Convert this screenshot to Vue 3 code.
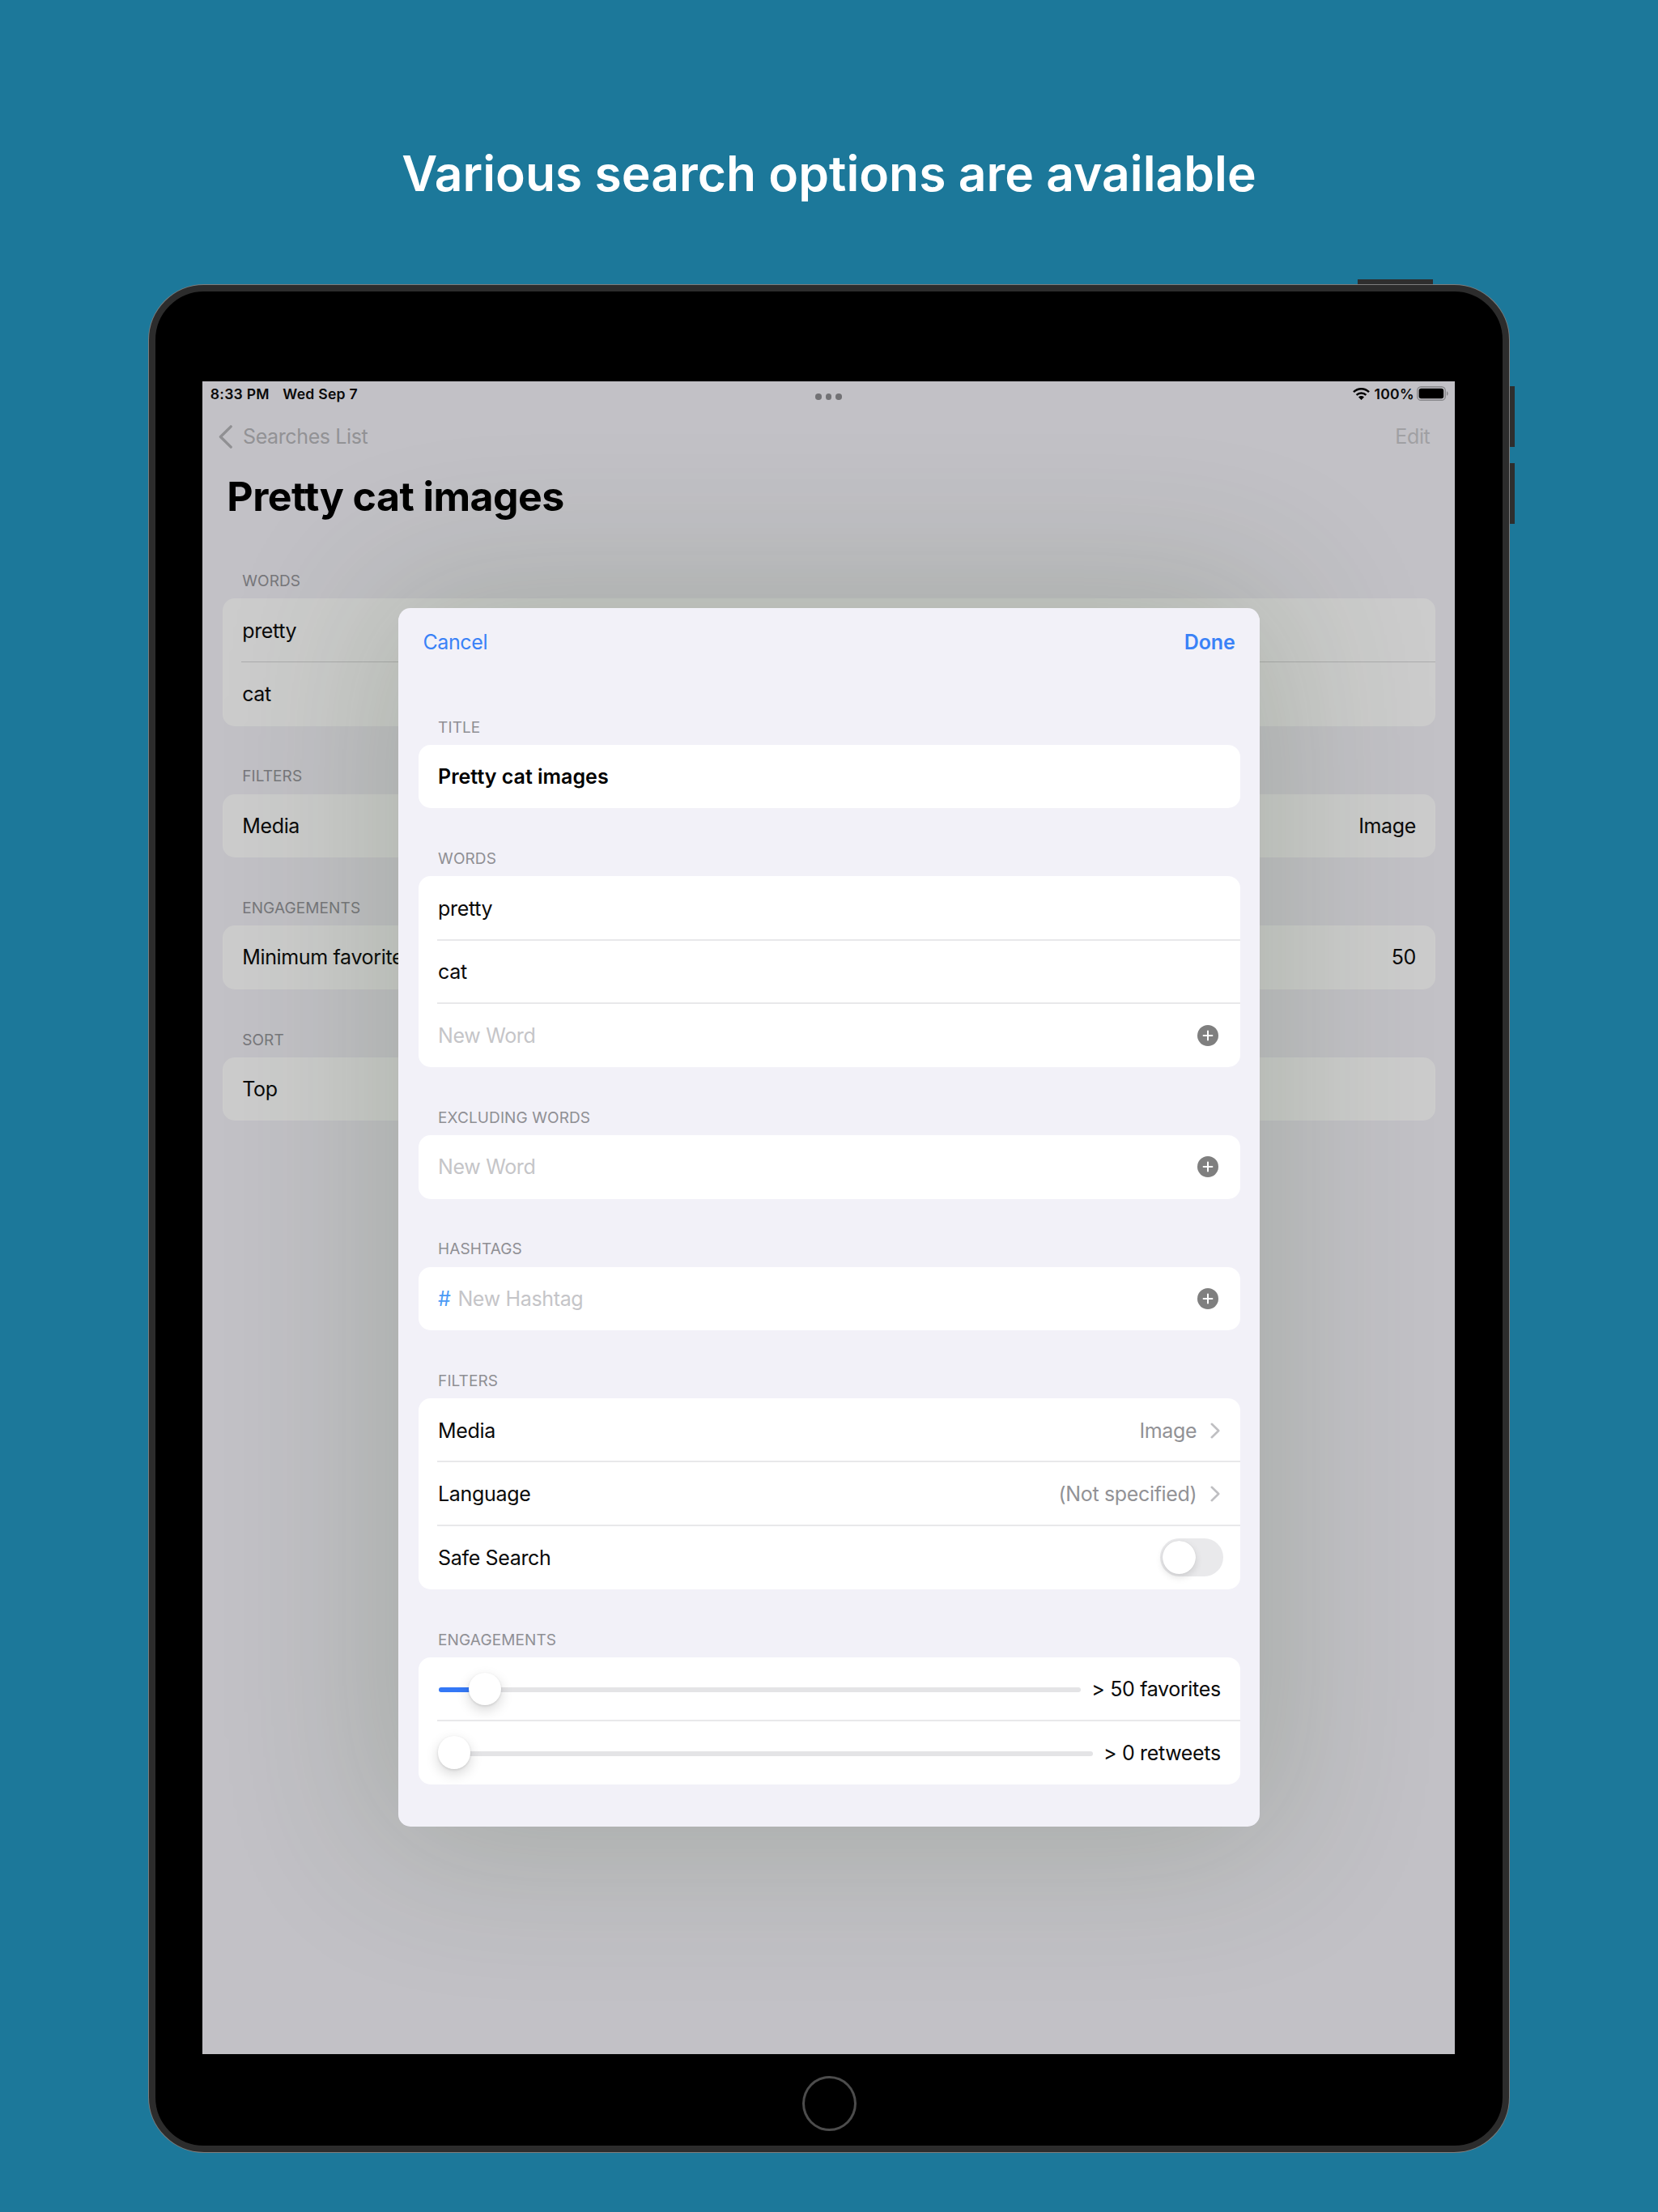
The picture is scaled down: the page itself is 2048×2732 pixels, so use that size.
<script setup>
const savedSections = [
  { title: 'Words', rows: [{ label: 'pretty' }, { label: 'cat' }] },
  { title: 'Filters', rows: [{ label: 'Media', value: 'Image' }] },
  { title: 'Engagements', rows: [{ label: 'Minimum favorites', value: '50' }] },
  { title: 'Sort', rows: [{ label: 'Top' }] },
]

const formSections = [
  { title: 'Title', rows: [{ kind: 'text', label: 'Pretty cat images', strong: true }] },
  {
    title: 'Words',
    rows: [
      { kind: 'text', label: 'pretty' },
      { kind: 'text', label: 'cat' },
      { kind: 'add', label: 'New Word' },
    ],
  },
  { title: 'Excluding Words', rows: [{ kind: 'add', label: 'New Word' }] },
  { title: 'Hashtags', rows: [{ kind: 'add', prefix: '#', label: 'New Hashtag' }] },
  {
    title: 'Filters',
    rows: [
      { kind: 'link', label: 'Media', value: 'Image' },
      { kind: 'link', label: 'Language', value: '(Not specified)' },
      { kind: 'toggle', label: 'Safe Search' },
    ],
  },
  {
    title: 'Engagements',
    rows: [
      { kind: 'slider', label: '> 50 favorites', position: 4.8 },
      { kind: 'slider', label: '> 0 retweets', position: 0 },
    ],
  },
]
</script>

<template>
  <div class="stage">
    <h1 class="headline">Various search options are available</h1>

    <div class="device">
      <span class="button power"></span>
      <span class="button volume-up"></span>
      <span class="button volume-down"></span>

      <div class="bezel">
        <div class="screen">
          <div class="status">
            <span class="time">8:33 PM</span>
            <span class="date">Wed Sep 7</span>
            <svg class="wifi" viewBox="0 0 21 15" aria-hidden="true">
              <g fill="none" stroke="#000" stroke-width="2.5">
                <path d="M1 5.2a13.6 13.6 0 0 1 19 0" />
                <path d="M4.6 8.8a8.6 8.6 0 0 1 11.8 0" />
              </g>
              <path d="M10.5 15 7 11.4a5 5 0 0 1 7 0z" />
            </svg>
            <span class="percent">100%</span>
            <svg class="battery" viewBox="0 0 39 18" aria-hidden="true">
              <rect x=".75" y=".75" width="34.5" height="16.5" rx="4.6" fill="none" stroke="#88888b" stroke-width="1.4" />
              <rect x="2.6" y="2.7" width="30.6" height="12.6" rx="2.8" />
              <path d="M37 6.2v5.6c2.2-.9 2.2-4.7 0-5.6z" fill="#88888b" />
            </svg>
          </div>

          <span class="dots"><i></i><i></i><i></i></span>

          <div class="nav">
            <svg class="back" viewBox="0 0 17 29" aria-hidden="true">
              <path d="M15.2 1.8 2.4 14.5l12.8 12.7" fill="none" stroke="#909093" stroke-width="3.3" stroke-linecap="round" stroke-linejoin="round" />
            </svg>
            <span>Searches List</span>
            <span class="edit">Edit</span>
          </div>

          <h2 class="title">Pretty cat images</h2>

          <section v-for="s in savedSections" :key="s.title" class="section">
            <h3>{{ s.title }}</h3>
            <div class="card">
              <div v-for="r in s.rows" :key="r.label" class="row">
                <span>{{ r.label }}</span>
                <span v-if="r.value" class="value">{{ r.value }}</span>
              </div>
            </div>
          </section>

          <div class="modal">
            <div class="modal-nav">
              <span>Cancel</span>
              <b>Done</b>
            </div>

            <section v-for="s in formSections" :key="s.title" class="section">
              <h3>{{ s.title }}</h3>
              <div class="card">
                <div v-for="r in s.rows" :key="r.label" class="row">
                  <div v-if="r.kind === 'slider'" class="slider">
                    <div class="fill" :style="{ width: r.position + '%' }"></div>
                    <div class="knob"></div>
                  </div>
                  <span v-if="r.prefix" class="hash">{{ r.prefix }}</span>
                  <span :class="{ strong: r.strong, placeholder: r.kind === 'add' }">{{ r.label }}</span>
                  <svg v-if="r.kind === 'add'" class="plus" viewBox="0 0 26 26" aria-hidden="true">
                    <circle cx="13" cy="13" r="13" fill="#7f7f7f" />
                    <path d="M13 7.6v10.8M7.6 13h10.8" stroke="#fff" stroke-width="2" stroke-linecap="round" />
                  </svg>
                  <template v-if="r.kind === 'link'">
                    <span class="value">{{ r.value }}</span>
                    <svg class="chevron" viewBox="0 0 12 20" aria-hidden="true">
                      <path d="M1.8 1.8 10.2 10l-8.4 8.2" fill="none" stroke="#bfbfc2" stroke-width="2.6" stroke-linecap="round" stroke-linejoin="round" />
                    </svg>
                  </template>
                  <div v-if="r.kind === 'toggle'" class="toggle"><i></i></div>
                </div>
              </div>
            </section>
          </div>
        </div>
        <div class="home"></div>
      </div>
    </div>
  </div>
</template>

<style>
body {
  margin: 0;
}
</style>

<style scoped>
.stage {
  width: 2048px;
  height: 2732px;
  overflow: hidden;
  background: #1c789a;
  font-family: Inter, "Liberation Sans", sans-serif;
  color: #0a0a0a;
}
.headline {
  margin: 0;
  padding-top: 174px;
  height: 176.5px;
  line-height: 80px;
  font-size: 60.5px;
  font-weight: 600;
  letter-spacing: 0.03px;
  text-align: center;
  color: #fff;
}
.device {
  position: relative;
  box-sizing: border-box;
  width: 1682px;
  height: 2308.5px;
  margin-left: 183px;
  padding: 1px;
  border-radius: 69px;
  background: #7d7d7d;
}
.button {
  position: absolute;
  background: #2e2e2e;
}
.power {
  left: 1493.5px;
  top: -6px;
  width: 93.5px;
  height: 6px;
}
.volume-up,
.volume-down {
  left: 1682px;
  width: 6px;
  height: 75.5px;
}
.volume-up {
  top: 126px;
}
.volume-down {
  top: 221px;
}
.bezel {
  box-sizing: border-box;
  height: 100%;
  border: 8px solid #2c2c2c;
  border-radius: 68px;
  background: #000;
  padding: 111.5px 58px 0;
  position: relative;
}
.screen {
  position: relative;
  width: 1547.4px;
  height: 2066px;
  overflow: hidden;
  background: #c2c1c6;
}
.status {
  display: flex;
  align-items: center;
  height: 30.6px;
  padding: 0 8px 0 9.8px;
  font-size: 17.6px;
  font-weight: 600;
  letter-spacing: 0.25px;
}
.date {
  margin-left: 16.5px;
}
.wifi {
  width: 21px;
  height: 15px;
  margin-left: auto;
}
.percent {
  margin-left: 6px;
}
.battery {
  width: 39px;
  height: 18px;
  margin-left: 3.5px;
}
.dots {
  position: absolute;
  left: 0;
  right: 0;
  top: 15px;
  display: flex;
  justify-content: center;
  gap: 5px;
}
.dots i {
  width: 7.5px;
  height: 7.5px;
  border-radius: 50%;
  background: #727275;
}
.nav {
  display: flex;
  align-items: center;
  height: 75px;
  padding: 0 31px 0 20.3px;
  font-size: 25px;
  letter-spacing: -0.38px;
  color: #929295;
}
.back {
  width: 17px;
  height: 29px;
  margin-right: 12.7px;
}
.edit {
  margin-left: auto;
  color: #a0a0a3;
}
.title {
  margin: 6.2px 0 0 30.3px;
  line-height: 60px;
  font-size: 50px;
  font-weight: 700;
  letter-spacing: -0.56px;
  color: #000;
}
.section {
  padding: 0 24.4px 0 24.8px;
}
.section h3 {
  box-sizing: border-box;
  display: flex;
  align-items: flex-end;
  height: 84px;
  margin: 0;
  padding: 0 0 9.2px 24.4px;
  line-height: 24px;
  font-size: 19px;
  font-weight: 400;
  letter-spacing: 0.1px;
  text-transform: uppercase;
  color: #77777b;
}
.title + .section h3 {
  height: 96.7px;
}
.card {
  border-radius: 15px;
  background: #ccc;
}
.row {
  position: relative;
  display: flex;
  align-items: center;
  height: 78.58px;
  padding: 0 24px 0 24.4px;
  font-size: 25px;
  letter-spacing: -0.34px;
}
.row + .row::before {
  content: "";
  position: absolute;
  left: 23.4px;
  right: 0;
  top: -0.8px;
  height: 1px;
  background: #acacad;
}
.value {
  margin-left: auto;
}
.modal {
  position: absolute;
  left: 242.4px;
  top: 279.6px;
  width: 1063.4px;
  height: 1505.4px;
  border-radius: 15px;
  background: #f2f1f8;
  box-shadow: 0 0 200px 22px rgba(48, 78, 29, 0.195);
}
.modal-nav {
  display: flex;
  align-items: center;
  justify-content: space-between;
  height: 85.7px;
  margin-bottom: 0.5px;
  padding: 0 30px;
  font-size: 25px;
  letter-spacing: -0.38px;
  color: #3a82f7;
}
.modal-nav b {
  font-weight: 600;
  letter-spacing: -0.05px;
}
.modal .section {
  padding: 0 24px 0 24.3px;
}
.modal h3 {
  color: #8f8f94;
}
.modal-nav + .section h3 {
  height: 83px;
}
.modal .card {
  background: #fff;
}
.modal .row + .row::before {
  top: -1.4px;
  height: 2px;
  background: #e8e8ea;
}
.strong {
  font-weight: 600;
  letter-spacing: 0;
  color: #000;
}
.placeholder {
  color: #c5c5c8;
}
.hash {
  margin-right: 8.8px;
  color: #4a9af5;
}
.plus {
  width: 26px;
  height: 26px;
  margin: 0 2.3px 0 auto;
}
.modal .value {
  color: #929296;
}
.chevron {
  width: 12px;
  height: 20px;
  margin: 0 1px 0 16.5px;
}
.toggle {
  box-sizing: border-box;
  width: 78px;
  height: 47px;
  margin: 0 -3px 0 auto;
  padding: 3px;
  border-radius: 23.5px;
  background: #e9e9eb;
}
.toggle i {
  display: block;
  width: 41px;
  height: 41px;
  border-radius: 50%;
  background: #fff;
  box-shadow: 0 4px 10px rgba(0, 0, 0, 0.12), 0 0 1px rgba(0, 0, 0, 0.15);
}
.slider {
  position: relative;
  flex: 1;
  display: flex;
  align-items: center;
  height: 6px;
  margin: 2px 13.5px 0 1.4px;
  border-radius: 3px;
  background: #e4e4e6;
}
.fill {
  height: 6px;
  border-radius: 3px 0 0 3px;
  background: #3478f6;
}
.knob {
  flex: none;
  width: 40.5px;
  height: 40.5px;
  margin: -2.5px 0 0 -1.6px;
  border-radius: 50%;
  background: #fff;
  box-shadow: 0 6px 16px rgba(0, 0, 0, 0.16), 0 1px 3px rgba(0, 0, 0, 0.12);
}
.home {
  box-sizing: border-box;
  width: 67px;
  height: 68px;
  margin: 27px auto 0;
  border: 3px solid #4c4c4c;
  border-radius: 50%;
}
</style>
